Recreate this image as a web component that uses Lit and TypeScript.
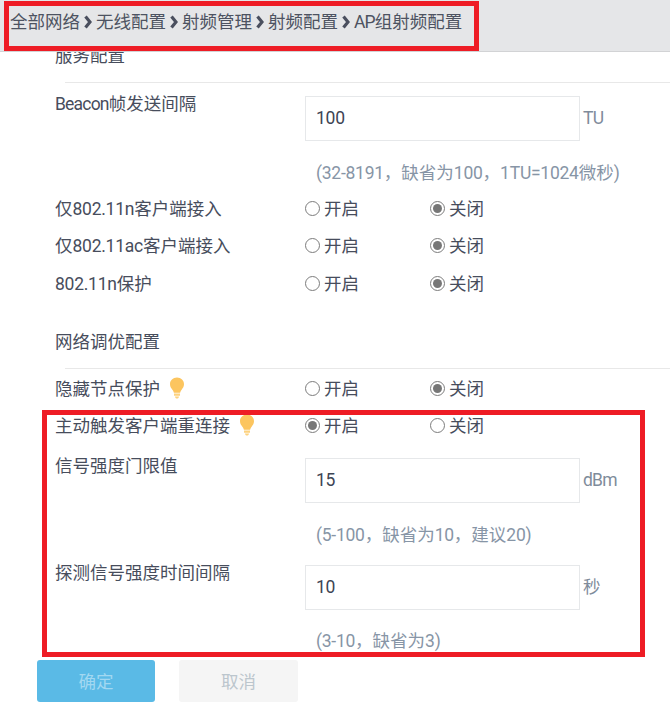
import { LitElement, html, css, svg } from "lit";
import { customElement } from "lit/decorators.js";

const crumbs = ["全部网络", "无线配置", "射频管理", "射频配置", "AP组射频配置"];

const bulb = html`<svg class="bulb" viewBox="0 0 16 22" aria-hidden="true">
  ${svg`<path fill="#fcc55f" d="M8 0.5C3.9 0.5 1 3.5 1 7.2c0 2.3 1 3.7 2.2 5.2.8 1 1.4 2 1.7 3.3h6.2c.3-1.3.9-2.3 1.7-3.3C13.9 10.9 15 9.5 15 7.2 15 3.5 12.1.5 8 .5z"/>
  <path fill="#fdd27f" d="M5 16.6h6v2.2H5zM6 19.4h4c0 1.2-.9 2.1-2 2.1s-2-.9-2-2.1z"/>`}
</svg>`;

/** Wraps runs of Latin characters so they can take the narrower Latin face. */
function mixed(text: string) {
  return text.split(/([\x21-\x7e]+)/).map((part, i) => {
    if (i % 2 === 0) return part;
    const cls = /^[A-Za-z]+$/.test(part) ? "lt word" : "lt";
    return html`<span class=${cls}>${part}</span>`;
  });
}

@customElement("app-root")
export class AppRoot extends LitElement {
  static styles = css`
    :host {
      display: flex;
      flex-direction: column;
      position: relative;
      width: 670px;
      height: 712px;
      overflow: hidden;
      background: #fff;
      font-family: "Noto Sans CJK SC", "Noto Sans", sans-serif;
      font-size: 17.5px;
      line-height: 24px;
      color: #474d5c;
    }
    .lt { font-family: Roboto, "Noto Sans CJK SC", sans-serif; line-height: 1; letter-spacing: -0.25px; }
    .lt.word { letter-spacing: -0.8px; }
    .head {
      flex: none;
      box-sizing: border-box;
      height: 52px;
      display: flex;
      align-items: flex-start;
      padding: 9px 0 0 10px;
      background: #e5e6e8;
      border-bottom: 1px solid #d2d3d5;
    }
    .crumb { white-space: nowrap; color: #4d5361; }
    .sep { flex: none; width: 8px; height: 14px; margin: 6px 4px 0 4px; }
    .body { flex: 1; overflow: hidden; }
    .scroll { margin-top: -9px; padding-left: 55px; }
    .section { height: 24px; }
    .rule { height: 1px; background: #e8e8e8; margin: 15px 0 0 10px; }
    .row { display: flex; }
    .label { flex: none; width: 250px; display: flex; align-items: center; gap: 9px; white-space: nowrap; }
    .field-row { align-items: flex-start; }
    .field-row .label { height: 24px; margin-top: -5px; }
    .field {
      flex: none;
      box-sizing: border-box;
      width: 275px;
      height: 45px;
      padding: 0 10px 2px;
      border: 1px solid #e6e8ea;
      background: #fff;
      font-family: Roboto, sans-serif;
      font-size: 17.5px;
      letter-spacing: -0.25px;
      color: #3d4454;
      outline: none;
    }
    .unit { margin: 9px 0 0 3px; color: #7f8c9b; }
    .hint { height: 24px; margin-left: 250px; padding-left: 11px; color: #8795a6; white-space: nowrap; }
    .radios { height: 24px; align-items: center; }
    .opt { display: flex; align-items: center; gap: 4px; width: 125px; white-space: nowrap; }
    .dot {
      flex: none;
      box-sizing: border-box;
      width: 15px;
      height: 15px;
      border-radius: 50%;
      border: 1px solid #7c7c7c;
      background: #fff;
      display: flex;
      align-items: center;
      justify-content: center;
    }
    .dot.on::after {
      content: "";
      width: 9px;
      height: 9px;
      border-radius: 50%;
      background: #777;
    }
    .bulb { flex: none; width: 16px; height: 22px; }
    .foot { position: absolute; left: 37px; top: 660px; display: flex; gap: 24px; }
    .btn {
      box-sizing: border-box;
      width: 118px;
      height: 42px;
      border-radius: 3px;
      display: flex;
      align-items: center;
      justify-content: center;
    }
    .ok { background: #5abae6; color: #a2d8f1; }
    .no { width: 119px; background: #f5f5f5; color: #bcc6cd; }
    .mark { position: absolute; box-sizing: border-box; border: 5px solid #ee1c25; pointer-events: none; }
    .mark.a { left: 4px; top: 1px; width: 475px; height: 50px; }
    .mark.b { left: 42px; top: 410px; width: 603px; height: 247px; }
    .gap7 { margin-top: 7px; }
    .gap12 { margin-top: 12px; }
    .gap13 { margin-top: 13px; }
    .gap14 { margin-top: 14px; }
    .gap18 { margin-top: 18px; }
    .gap19 { margin-top: 19px; }
    .gap21 { margin-top: 21px; }
    .gap34 { margin-top: 34px; }
  `;

  private rowRadio(label: unknown, first: boolean, cls: string) {
    return html`<div class="row radios ${cls}">
      <div class="label">${label}</div>
      <div class="opt"><span class="dot ${first ? "on" : ""}"></span>开启</div>
      <div class="opt"><span class="dot ${first ? "" : "on"}"></span>关闭</div>
    </div>`;
  }

  private rowField(label: string, value: string, unit: string, cls: string) {
    return html`<div class="row field-row ${cls}">
      <div class="label"><span>${mixed(label)}</span></div>
      <input class="field" .value=${value} readonly />
      <div class="unit">${mixed(unit)}</div>
    </div>`;
  }

  render() {
    return html`
      <div class="head">
        ${crumbs.map(
          (c, i) => html`${i > 0
              ? html`<svg class="sep" viewBox="0 0 8 14" aria-hidden="true">${svg`<path d="M1.5 1.5L6 7l-4.500 5.500" fill="none" stroke="#4a4f5e" stroke-width="3.2"/>`}</svg>`
              : ""}<span class="crumb">${mixed(c)}</span>`
        )}
      </div>
      <div class="body">
        <div class="scroll">
          <div class="section">服务配置</div>
          <div class="rule"></div>
          ${this.rowField("Beacon帧发送间隔", "100", "TU", "gap13")}
          <div class="hint gap19">${mixed("(32-8191，缺省为100，1TU=1024微秒)")}</div>
          ${this.rowRadio(html`<span>${mixed("仅802.11n客户端接入")}</span>`, false, "gap12")}
          ${this.rowRadio(html`<span>${mixed("仅802.11ac客户端接入")}</span>`, false, "gap13")}
          ${this.rowRadio(html`<span>${mixed("802.11n保护")}</span>`, false, "gap14")}
          <div class="section gap34">网络调优配置</div>
          <div class="rule"></div>
          ${this.rowRadio(html`<span>隐藏节点保护</span>${bulb}`, false, "gap7")}
          ${this.rowRadio(html`<span>主动触发客户端重连接</span>${bulb}`, true, "gap13")}
          ${this.rowField("信号强度门限值", "15", "dBm", "gap21")}
          <div class="hint gap19">${mixed("(5-100，缺省为10，建议20)")}</div>
          ${this.rowField("探测信号强度时间间隔", "10", "秒", "gap19")}
          <div class="hint gap18">${mixed("(3-10，缺省为3)")}</div>
        </div>
      </div>
      <div class="foot">
        <div class="btn ok">确定</div>
        <div class="btn no">取消</div>
      </div>
      <div class="mark a"></div>
      <div class="mark b"></div>
    `;
  }
}
